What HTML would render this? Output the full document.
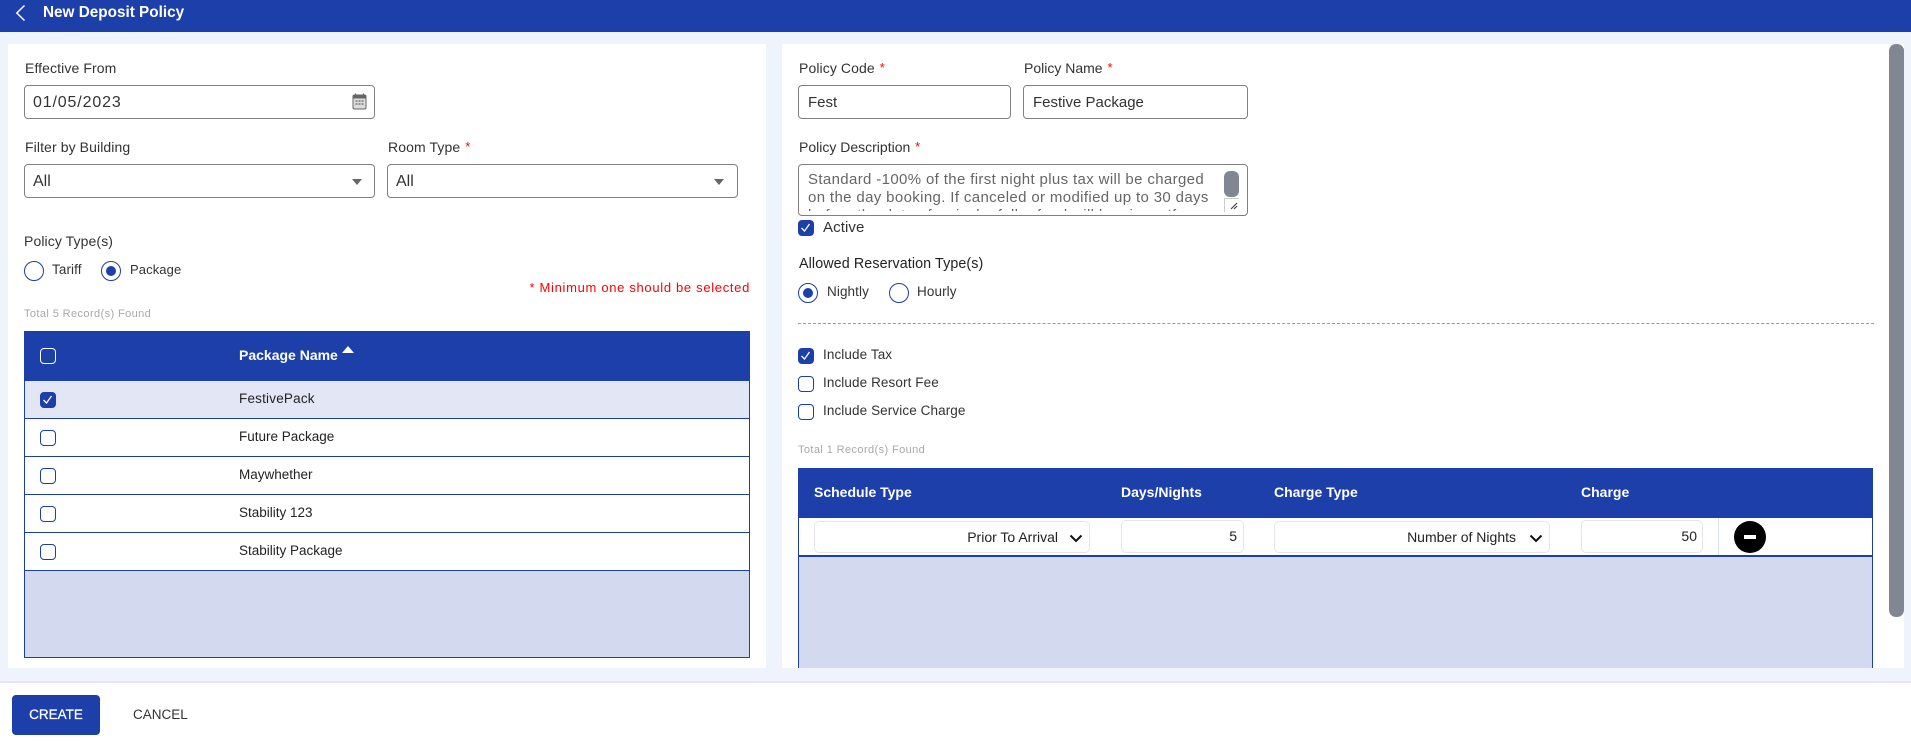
<!DOCTYPE html>
<html><head><meta charset="utf-8"><style>
*{box-sizing:border-box}
html,body{margin:0;padding:0;width:1911px;height:742px;overflow:hidden;background:#fff;font-family:"Liberation Sans",sans-serif;color:#333}
.a{position:absolute}
.t{position:absolute;white-space:nowrap;line-height:20px;height:20px;font-size:14px;letter-spacing:.1px}
.i{position:absolute;background:#fff;border:1px solid #808080;border-radius:4px}
.v{position:absolute;white-space:nowrap;line-height:20px;height:20px;font-size:16px;color:#333}
.r{color:#f00;font-size:13px;position:relative;top:-1px;margin-left:1px}
.cb{position:absolute;width:16px;height:16px;border:1.5px solid #1c3faa;border-radius:4px;background:#fff}
.cb.on{background:#1c3faa}
.cb.on svg{position:absolute;left:0;top:0}
.cb.w{border-color:#fff;background:transparent}
.rd{position:absolute;width:20px;height:20px;border:1.5px solid #1c3faa;border-radius:50%;background:#fff}
.rd.on:after{content:"";position:absolute;left:3.5px;top:3.5px;width:10px;height:10px;border-radius:50%;background:#1c3faa}
.h{position:absolute;color:#fff;font-weight:700;font-size:14px;line-height:20px;height:20px;white-space:nowrap}
.row{position:absolute;left:24px;width:726px;border:1px solid #1c3faa;border-top:0;background:#fff}
.c{position:absolute;background:#fff;border:1px solid #e3e6ef;border-radius:5px}
.n{position:absolute;font-size:13.5px;color:#222;white-space:nowrap;line-height:20px;height:20px}
</style></head><body>
<div class="a" style="left:0;top:0;width:1911px;height:681px;background:#eff3fb"></div>
<div class="a" style="left:0;top:0;width:1911px;height:32px;background:#1c3faa"></div>
<svg class="a" style="left:14px;top:3px" width="14" height="20" viewBox="0 0 14 20"><path d="M10.500 2.500 L2.800 10 L10.500 17.500" fill="none" stroke="#fff" stroke-width="1.500"/></svg>
<div class="a" style="left:43px;top:3px;color:#fff;font-size:15.300px;font-weight:700;line-height:20px;white-space:nowrap">New Deposit Policy</div>

<div class="a" style="left:8px;top:44px;width:758px;height:624px;background:#fff"></div>
<div class="a" style="left:782px;top:44px;width:1122px;height:624px;background:#fff"></div>

<div class="t" style="left:25px;top:58px">Effective From</div>
<div class="i" style="left:24px;top:85px;width:351px;height:34px"></div>
<div class="v" style="left:33px;top:93px;letter-spacing:.85px">01/05/2023</div>
<svg class="a" style="left:352px;top:93px" width="15" height="17" viewBox="0 0 15 17"><path d="M3.500 0.500V3M11.500 .5V3" stroke="#666" stroke-width="1.200" fill="none"/><rect x="1" y="2" width="13" height="14" rx="1.500" fill="#ddd" stroke="#666"/><rect x="1" y="2" width="13" height="3.500" fill="#666"/><path d="M3.500 8h2M6.500 8h2M9.500 8h2M3.500 11h2M6.500 11h2M9.500 11h2" stroke="#666" stroke-width="1.200"/></svg>

<div class="t" style="left:25px;top:137px">Filter by Building</div>
<div class="t" style="left:388px;top:137px">Room Type <span class="r">*</span></div>
<div class="i" style="left:24px;top:164px;width:351px;height:34px"></div>
<div class="v" style="left:33px;top:172px">All</div>
<svg class="a" style="left:352px;top:179px" width="10" height="6"><path d="M0 0H10L5 6Z" fill="#666"/></svg>
<div class="i" style="left:387px;top:164px;width:351px;height:34px"></div>
<div class="v" style="left:396px;top:172px">All</div>
<svg class="a" style="left:714px;top:179px" width="10" height="6"><path d="M0 0H10L5 6Z" fill="#666"/></svg>

<div class="t" style="left:24px;top:231px;font-size:14px">Policy Type(s)</div>
<div class="rd" style="left:24px;top:261px"></div>
<div class="t" style="left:52px;top:260px;font-size:13.500px">Tariff</div>
<div class="rd on" style="left:101px;top:261px"></div>
<div class="t" style="left:130px;top:260px;font-size:13px">Package</div>
<div class="t" style="left:520px;top:278px;width:230px;text-align:right;color:#f00;font-size:13px;letter-spacing:.68px">* Minimum one should be selected</div>
<div class="t" style="left:24px;top:304px;color:#a8a8a8;font-size:11px;letter-spacing:.4px">Total 5 Record(s) Found</div>

<div class="a" style="left:24px;top:331px;width:726px;height:50px;background:#1c3faa"></div>
<div class="cb w" style="left:40px;top:348px"></div>
<div class="h" style="left:239px;top:345px">Package Name</div>
<svg class="a" style="left:342px;top:346px" width="12" height="7"><path d="M0 7L6 0L12 7Z" fill="#fff"/></svg>
<div class="row" style="top:381px;height:38px;background:#e2e6f5"></div>
<div class="row" style="top:419px;height:38px"></div>
<div class="row" style="top:457px;height:38px"></div>
<div class="row" style="top:495px;height:38px"></div>
<div class="row" style="top:533px;height:38px"></div>
<div class="row" style="top:571px;height:87px;background:#d3d9ee"></div>
<div class="cb on" style="left:40px;top:392px"><svg width="13" height="13" viewBox="0 0 13 13"><path d="M2.500 7L5.500 10L10.500 3" fill="none" stroke="#fff" stroke-width="1.300"/></svg></div>
<div class="cb" style="left:40px;top:430px"></div>
<div class="cb" style="left:40px;top:468px"></div>
<div class="cb" style="left:40px;top:506px"></div>
<div class="cb" style="left:40px;top:544px"></div>
<div class="n" style="left:239px;top:389px;letter-spacing:.2px">FestivePack</div>
<div class="n" style="left:239px;top:427px">Future Package</div>
<div class="n" style="left:239px;top:465px">Maywhether</div>
<div class="n" style="left:239px;top:503px">Stability 123</div>
<div class="n" style="left:239px;top:541px">Stability Package</div>

<div class="t" style="left:799px;top:58px">Policy Code <span class="r">*</span></div>
<div class="t" style="left:1024px;top:58px;letter-spacing:0">Policy Name <span class="r">*</span></div>
<div class="i" style="left:798px;top:85px;width:213px;height:34px"></div>
<div class="v" style="left:808px;top:93px;font-size:15px">Fest</div>
<div class="i" style="left:1023px;top:85px;width:225px;height:34px"></div>
<div class="v" style="left:1033px;top:93px;font-size:15px">Festive Package</div>
<div class="t" style="left:799px;top:137px;letter-spacing:0">Policy Description <span class="r">*</span></div>
<div class="i" style="left:798px;top:164px;width:450px;height:52px;overflow:hidden">
<div class="a" style="left:9px;top:6px;width:425px;height:40px;overflow:hidden;color:#666;font-size:15px;line-height:18px;white-space:nowrap;letter-spacing:.36px">Standard -100% of the first night plus tax will be charged<br>on the day booking. If canceled or modified up to 30 days<br>before the date of arrival a full refund will be given. If</div>
<div class="a" style="left:425px;top:6px;width:15px;height:26px;background:#808793;border-radius:6px"></div>
<div class="a" style="left:425px;top:33px;width:15px;height:14px;background:#fff;border-left:1px solid #ccc;border-top:1px solid #ccc"></div>
<svg class="a" style="left:431px;top:37px" width="8" height="8"><path d="M1 7L7 1M4 7L7 4" stroke="#444" stroke-width="1.200"/></svg>
</div>
<div class="cb on" style="left:798px;top:220px"><svg width="13" height="13" viewBox="0 0 13 13"><path d="M2.500 7L5.500 10L10.500 3" fill="none" stroke="#fff" stroke-width="1.300"/></svg></div>
<div class="t" style="left:823px;top:218px;font-size:15px">Active</div>
<div class="t" style="left:799px;top:254px;font-size:14.300px;color:#222">Allowed Reservation Type(s)</div>
<div class="rd on" style="left:798px;top:283px"></div>
<div class="t" style="left:827px;top:282px;font-size:13.500px">Nightly</div>
<div class="rd" style="left:889px;top:283px"></div>
<div class="t" style="left:917px;top:282px;font-size:13.500px">Hourly</div>
<div class="a" style="left:798px;top:323px;width:1076px;height:0;border-top:1px dashed #999"></div>
<div class="cb on" style="left:798px;top:348px"><svg width="13" height="13" viewBox="0 0 13 13"><path d="M2.500 7L5.500 10L10.500 3" fill="none" stroke="#fff" stroke-width="1.300"/></svg></div>
<div class="t" style="left:823px;top:345px;font-size:13.500px">Include Tax</div>
<div class="cb" style="left:798px;top:376px"></div>
<div class="t" style="left:823px;top:373px;font-size:13.500px">Include Resort Fee</div>
<div class="cb" style="left:798px;top:404px"></div>
<div class="t" style="left:823px;top:401px;font-size:13.500px">Include Service Charge</div>
<div class="t" style="left:798px;top:440px;color:#a8a8a8;font-size:11px;letter-spacing:.4px">Total 1 Record(s) Found</div>

<div class="a" style="left:798px;top:468px;width:1075px;height:50px;background:#1c3faa"></div>
<div class="h" style="left:814px;top:482px">Schedule Type</div>
<div class="h" style="left:1121px;top:482px">Days/Nights</div>
<div class="h" style="left:1274px;top:482px">Charge Type</div>
<div class="h" style="left:1581px;top:482px">Charge</div>
<div class="a" style="left:798px;top:518px;width:1075px;height:39px;background:#fff;border:1px solid #1c3faa;border-top:0;border-bottom:2px solid #1c3faa"></div>
<div class="a" style="left:798px;top:557px;width:1075px;height:111px;background:#d3d9ee;border-left:1px solid #1c3faa;border-right:1px solid #1c3faa"></div>
<div class="c" style="left:814px;top:521px;width:276px;height:32px"></div>
<div class="n" style="right:853px;top:527px;font-size:14px">Prior To Arrival</div>
<svg class="a" style="left:1069px;top:534px" width="14" height="9"><path d="M1.500 1.500L7 7L12.500 1.500" fill="none" stroke="#111" stroke-width="2"/></svg>
<div class="c" style="left:1121px;top:520px;width:123px;height:33px"></div>
<div class="n" style="right:674px;top:526px;font-size:14px">5</div>
<div class="c" style="left:1274px;top:521px;width:276px;height:32px"></div>
<div class="n" style="right:395px;top:527px;font-size:14px">Number of Nights</div>
<svg class="a" style="left:1529px;top:534px" width="14" height="9"><path d="M1.500 1.500L7 7L12.500 1.500" fill="none" stroke="#111" stroke-width="2"/></svg>
<div class="c" style="left:1581px;top:520px;width:122px;height:33px"></div>
<div class="n" style="right:214px;top:526px;font-size:14px">50</div>
<div class="a" style="left:1718px;top:518px;width:1px;height:37px;background:#dde0ee"></div>
<div class="a" style="left:1734px;top:521px;width:32px;height:32px;border-radius:50%;background:#000"></div>
<div class="a" style="left:1744px;top:535px;width:12px;height:4px;background:#fff"></div>

<div class="a" style="left:1889px;top:44px;width:15px;height:573px;background:#808793;border-radius:7px"></div>

<div class="a" style="left:0;top:681px;width:1911px;height:2px;background:#e6e6e6"></div>
<div class="a" style="left:12px;top:695px;width:88px;height:40px;background:#1c3faa;border-radius:4px;color:#fff;font-size:13.500px;font-weight:400;text-align:center;line-height:40px;-webkit-text-stroke:.25px #fff">CREATE</div>
<div class="a" style="left:133px;top:695px;line-height:40px;font-size:13.500px;color:#333">CANCEL</div>
</body></html>
